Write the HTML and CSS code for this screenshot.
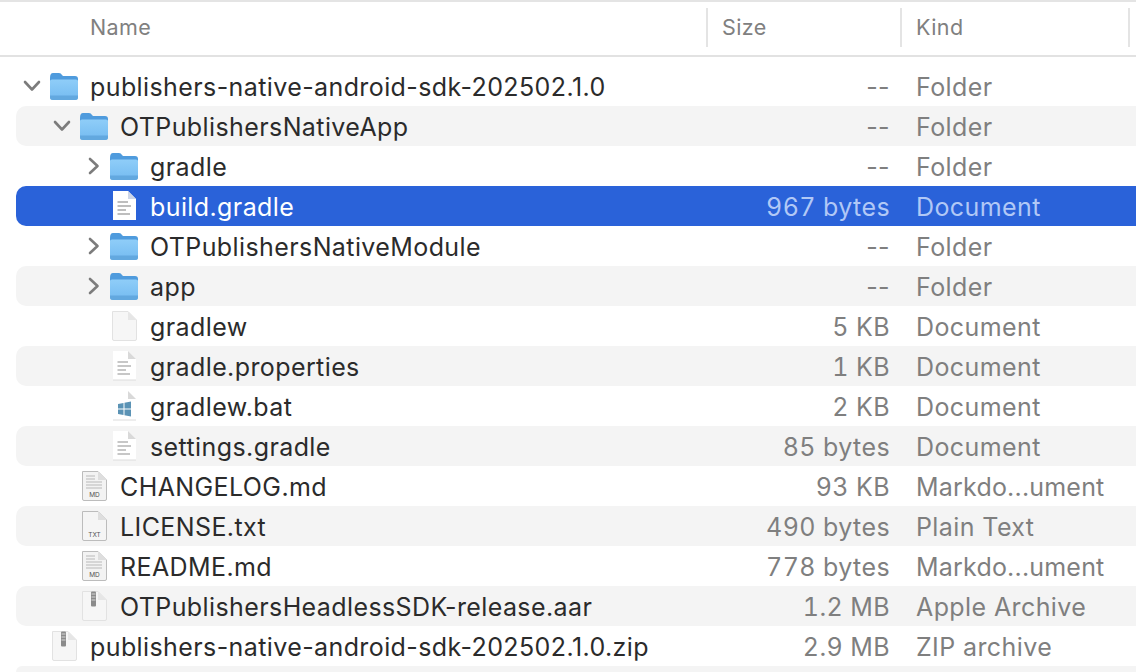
FILE: index.html
```html
<!DOCTYPE html>
<html lang="en">
<head>
    <meta charset="UTF-8">
    <title>Finder list</title>
    <link rel="stylesheet" href="styles.css">
</head>
<body>

    <!-- Icon sprites -->
    <svg class="sprites" width="0" height="0" aria-hidden="true">
        <defs>
            <linearGradient id="g-folder" x1="0" y1="0" x2="0" y2="1">
                <stop offset="0" stop-color="#8fcdf8"/>
                <stop offset="1" stop-color="#74bbf1"/>
            </linearGradient>
        </defs>
        <symbol id="i-folder" viewBox="0 0 32 32">
            <path d="M2 8 Q2 3 5 3 H11 Q13 3 14 5 L15 6 H27 Q30 6 30 9 V14 H2 Z" fill="#4f9bdd"/>
            <path d="M2 11 Q2 9.500 4 9.500 H28 Q30 9.500 30 11 V27 Q30 30 27 30 H5 Q2 30 2 27 Z" fill="url(#g-folder)"/>
            <path d="M2 25.500 H30 V27.500 Q30 30 27 30 H5 Q2 30 2 27.500 Z" fill="#62a8df"/>
        </symbol>
        <symbol id="i-doc" viewBox="0 0 32 32">
            <path d="M5 1 H20 L28 9 V30 H5 Z" fill="#fff"/>
            <path d="M20 1 L28 9 H20 Z" fill="#d9d9d9"/>
            <path d="M5 30 H28" stroke="#dcdcdc" stroke-width="1"/>
        </symbol>
        <symbol id="i-doc-lines" viewBox="0 0 32 32">
            <use href="#i-doc"/>
            <path d="M9.500 12 H20 M9.500 16 H23 M9.500 20 H18 M9.500 24 H22" stroke="#b5b5b5" stroke-width="1.400"/>
        </symbol>
        <symbol id="i-doc-sel" viewBox="0 0 32 32">
            <path d="M5 1 H20 L28 9 V30 H5 Z" fill="#fff"/>
            <path d="M20 1 L28 9 H20 Z" fill="#cdd6e8"/>
            <path d="M9.500 12 H20 M9.500 16 H23 M9.500 20 H18 M9.500 24 H22" stroke="#a9a9a9" stroke-width="1.500"/>
        </symbol>
        <symbol id="i-doc-plain" viewBox="0 0 32 32">
            <path d="M4.500 1.500 H20 L28.500 10 V29 Q28.500 30.500 27 30.500 H6 Q4.500 30.500 4.500 29 Z" fill="#f6f6f6" stroke="#e2e2e2"/>
            <path d="M20 1.500 V10 H28.500 Z" fill="#e6e6e6"/>
        </symbol>
        <symbol id="i-doc-bat" viewBox="0 0 32 32">
            <use href="#i-doc"/>
            <path d="M10 14 L15.500 13 V18.500 H10 Z M16.500 12.800 L23 11.500 V18.500 H16.500 Z M10 19.500 H15.500 V25 L10 24 Z M16.500 19.500 H23 V26.500 L16.500 25.200 Z" fill="#5b93b5"/>
        </symbol>
        <symbol id="i-doc-zip" viewBox="0 0 32 32">
            <use href="#i-doc-plain"/>
            <rect x="13" y="1.500" width="5" height="15" rx="1" fill="#8b8b8b"/>
            <path d="M13.500 4 H17.500 M13.500 7 H17.500 M13.500 10 H17.500" stroke="#d5d5d5" stroke-width="1"/>
        </symbol>
        <symbol id="i-doc-md" viewBox="0 0 32 32">
            <path d="M4.500 1.500 H20 L28.500 10 V29 Q28.500 30.500 27 30.500 H6 Q4.500 30.500 4.500 29 Z" fill="#f3f3f3" stroke="#bcbcbc"/>
            <path d="M20 1.500 V10 H28.500 Z" fill="#dedede"/>
            <path d="M8 6 H17 M8 9 H17 M8 12 H24 M8 15 H24 M8 18 H24" stroke="#cdcdcd" stroke-width="1.500"/>
        </symbol>
        <symbol id="i-doc-txt" viewBox="0 0 32 32">
            <path d="M4.500 1.500 H20 L28.500 10 V29 Q28.500 30.500 27 30.500 H6 Q4.500 30.500 4.500 29 Z" fill="#f5f5f5" stroke="#bcbcbc"/>
            <path d="M20 1.500 V10 H28.500 Z" fill="#dedede"/>
        </symbol>
        <symbol id="i-down" viewBox="0 0 20 20">
            <path d="M3 6 L10 13.500 L17 6" fill="none" stroke="#7c7c7c" stroke-width="2.600" stroke-linecap="round" stroke-linejoin="round"/>
        </symbol>
        <symbol id="i-right" viewBox="0 0 20 20">
            <path d="M8 3 L15.500 10 L8 17" fill="none" stroke="#7c7c7c" stroke-width="2.600" stroke-linecap="round" stroke-linejoin="round"/>
        </symbol>
    </svg>

    <!-- Column header -->
    <header class="cabecalho">
        <div class="col-name"><span>Name</span></div>
        <div class="col-size"><span>Size</span></div>
        <div class="col-kind"><span>Kind</span></div>
    </header>

    <!-- File list -->
    <main class="lista">
        <div class="linha">
            <span class="nome"><svg class="seta"><use href="#i-down"/></svg><svg class="icone"><use href="#i-folder"/></svg><span>publishers-native-android-sdk-202502.1.0</span></span>
            <span class="tamanho vazio">--</span><span class="tipo">Folder</span>
        </div>
        <div class="linha par nivel-1">
            <span class="nome"><svg class="seta"><use href="#i-down"/></svg><svg class="icone"><use href="#i-folder"/></svg><span>OTPublishersNativeApp</span></span>
            <span class="tamanho vazio">--</span><span class="tipo">Folder</span>
        </div>
        <div class="linha nivel-2">
            <span class="nome"><svg class="seta"><use href="#i-right"/></svg><svg class="icone"><use href="#i-folder"/></svg><span>gradle</span></span>
            <span class="tamanho vazio">--</span><span class="tipo">Folder</span>
        </div>
        <div class="linha selecionada nivel-2">
            <span class="nome"><svg class="seta"></svg><svg class="icone"><use href="#i-doc-sel"/></svg><span>build.gradle</span></span>
            <span class="tamanho">967 bytes</span><span class="tipo">Document</span>
        </div>
        <div class="linha nivel-2">
            <span class="nome"><svg class="seta"><use href="#i-right"/></svg><svg class="icone"><use href="#i-folder"/></svg><span>OTPublishersNativeModule</span></span>
            <span class="tamanho vazio">--</span><span class="tipo">Folder</span>
        </div>
        <div class="linha par nivel-2">
            <span class="nome"><svg class="seta"><use href="#i-right"/></svg><svg class="icone"><use href="#i-folder"/></svg><span>app</span></span>
            <span class="tamanho vazio">--</span><span class="tipo">Folder</span>
        </div>
        <div class="linha nivel-2">
            <span class="nome"><svg class="seta"></svg><svg class="icone"><use href="#i-doc-plain"/></svg><span>gradlew</span></span>
            <span class="tamanho">5 KB</span><span class="tipo">Document</span>
        </div>
        <div class="linha par nivel-2">
            <span class="nome"><svg class="seta"></svg><svg class="icone"><use href="#i-doc-lines"/></svg><span>gradle.properties</span></span>
            <span class="tamanho">1 KB</span><span class="tipo">Document</span>
        </div>
        <div class="linha nivel-2">
            <span class="nome"><svg class="seta"></svg><svg class="icone"><use href="#i-doc-bat"/></svg><span>gradlew.bat</span></span>
            <span class="tamanho">2 KB</span><span class="tipo">Document</span>
        </div>
        <div class="linha par nivel-2">
            <span class="nome"><svg class="seta"></svg><svg class="icone"><use href="#i-doc-lines"/></svg><span>settings.gradle</span></span>
            <span class="tamanho">85 bytes</span><span class="tipo">Document</span>
        </div>
        <div class="linha nivel-1">
            <span class="nome"><svg class="seta"></svg><svg class="icone"><use href="#i-doc-md"/><text class="selo" x="16.500" y="27">MD</text></svg><span>CHANGELOG.md</span></span>
            <span class="tamanho">93 KB</span><span class="tipo cortado">Markdo...ument</span>
        </div>
        <div class="linha par nivel-1">
            <span class="nome"><svg class="seta"></svg><svg class="icone"><use href="#i-doc-txt"/><text class="selo" x="16.500" y="27">TXT</text></svg><span>LICENSE.txt</span></span>
            <span class="tamanho">490 bytes</span><span class="tipo">Plain Text</span>
        </div>
        <div class="linha nivel-1">
            <span class="nome"><svg class="seta"></svg><svg class="icone"><use href="#i-doc-md"/><text class="selo" x="16.500" y="27">MD</text></svg><span>README.md</span></span>
            <span class="tamanho">778 bytes</span><span class="tipo cortado">Markdo...ument</span>
        </div>
        <div class="linha par nivel-1">
            <span class="nome"><svg class="seta"></svg><svg class="icone"><use href="#i-doc-zip"/></svg><span>OTPublishersHeadlessSDK-release.aar</span></span>
            <span class="tamanho">1.2 MB</span><span class="tipo">Apple Archive</span>
        </div>
        <div class="linha">
            <span class="nome"><svg class="seta"></svg><svg class="icone"><use href="#i-doc-zip"/></svg><span>publishers-native-android-sdk-202502.1.0.zip</span></span>
            <span class="tamanho">2.9 MB</span><span class="tipo">ZIP archive</span>
        </div>
        <div class="linha par fim"></div>
    </main>

</body>
</html>
```

FILE: styles.css
```css
/* General */
html, body {
    height: 100%;
}

body {
    margin: 0;
    overflow: hidden;
    background: #fff;
    color: #2b2b2b;
    font-family: "Inter", "Liberation Sans", sans-serif;
    font-size: 25px;
    letter-spacing: 0.4px;
}

.sprites {
    display: block;
}

/* Column header */
.cabecalho {
    display: grid;
    grid-template-columns: 706px 194px 230px 6px;
    height: 53px;
    border-top: 2px solid #e4e4e4;
    border-bottom: 2px solid #e2e2e2;
    color: #808080;
    font-size: 21.5px;
    box-sizing: content-box;
}

.cabecalho div {
    display: flex;
    align-items: center;
    margin: 6px 0 8px;
    padding-bottom: 2px;
    box-sizing: border-box;
}

.col-name {
    padding-left: 90px;
}

.col-size,
.col-kind {
    border-left: 2px solid #e4e4e4;
}

.col-size {
    padding-left: 14px;
}

.col-kind {
    padding-left: 14px;
    border-right: 2px solid #e4e4e4;
}

/* Rows */
.lista {
    padding-top: 9px;
}

.linha {
    display: grid;
    grid-template-columns: 690px 184px 1fr;
    align-items: center;
    height: 40px;
    margin-left: 16px;
}

.linha.par {
    background: #f4f4f4;
    border-radius: 10px 0 0 10px;
}

.linha.fim {
    height: 6px;
    border-radius: 10px 0 0 0;
}

.linha.selecionada {
    background: #2a62d9;
    border-radius: 10px 0 0 10px;
    color: #fff;
}

.nome {
    display: flex;
    align-items: center;
    padding-left: 6px;
    white-space: nowrap;
}

.nome span,
.tamanho,
.tipo {
    padding-top: 2px;
}

.nivel-1 .nome {
    padding-left: 36px;
}

.nivel-2 .nome {
    padding-left: 66px;
}

.seta {
    flex: none;
    width: 20px;
    height: 20px;
}

.icone {
    flex: none;
    width: 32px;
    height: 32px;
    margin: 0 10px 0 6px;
}

/* Small label on document icons */
.selo {
    font-size: 6.5px;
    letter-spacing: 0;
    fill: #555;
    text-anchor: middle;
}

.tamanho {
    color: #7f7f7f;
    text-align: right;
    font-variant-numeric: tabular-nums;
}

.tamanho.vazio {
    font-variant-numeric: normal;
}

.tipo {
    padding-left: 26px;
    color: #7f7f7f;
}

.tipo.cortado {
    letter-spacing: 0.2px;
}

.selecionada .tamanho,
.selecionada .tipo {
    color: #b1c8f6;
}
```
